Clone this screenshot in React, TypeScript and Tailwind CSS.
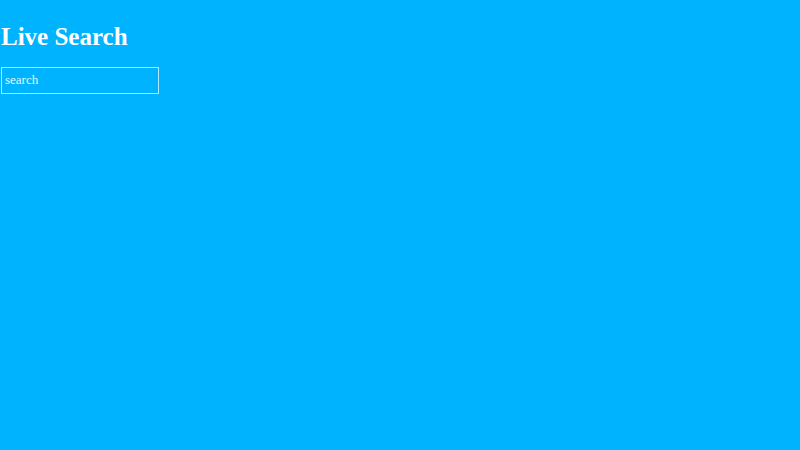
import { useState } from "react";

export default function App() {
  const [query, setQuery] = useState("");

  return (
    <main className="min-h-screen bg-[#00b3ff] px-px pt-[21px] font-['Liberation_Serif',serif] text-white">
      <h1 className="text-[25px] leading-8 font-bold">Live Search</h1>
      <input
        type="search"
        aria-label="Search"
        placeholder="search"
        value={query}
        onChange={(event) => setQuery(event.target.value)}
        className="mt-3.5 block h-[27px] w-[158px] appearance-none border border-white/70 bg-transparent px-[3px] pb-0.5 text-[13px] outline-none placeholder:text-white/90"
      />
    </main>
  );
}
